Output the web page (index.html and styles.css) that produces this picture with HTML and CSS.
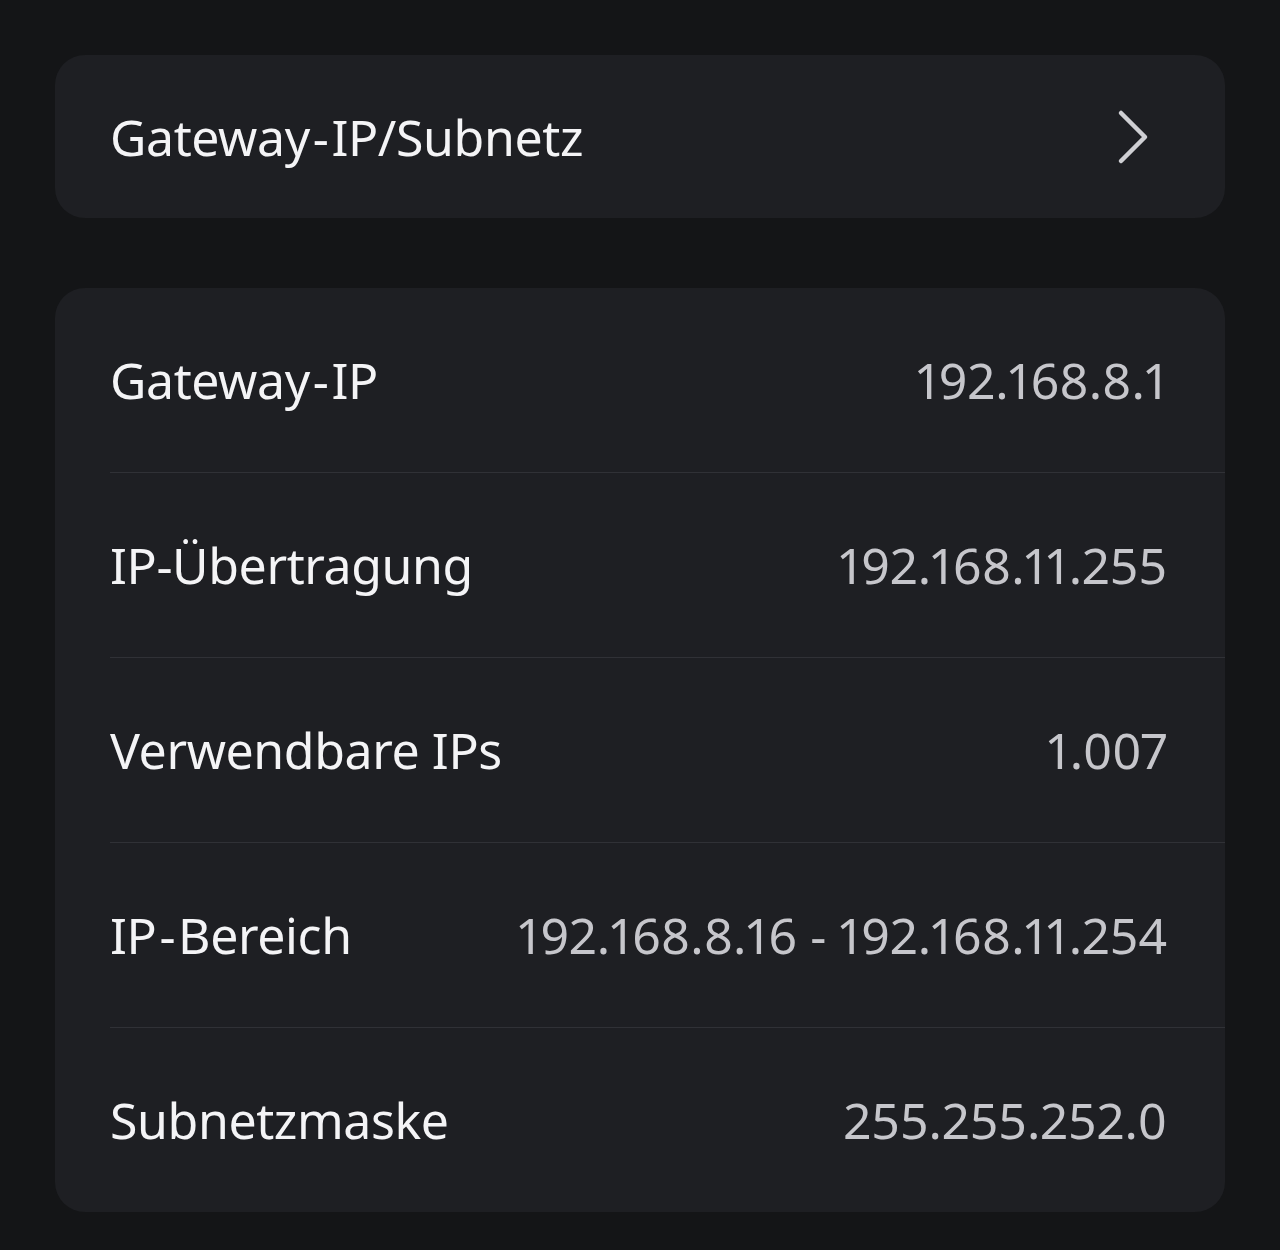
FILE: index.html
```html
<!DOCTYPE html>
<html lang="de">
<head>
<meta charset="utf-8">
<link rel="stylesheet" href="styles.css">
</head>
<body>
<main class="page">
  <section class="card nav-card">
    <div class="nav-row">
      <span class="label">Gateway<span class="hy">-</span>IP/Subnetz</span>
      <svg class="chevron" width="36" height="56" viewBox="0 0 36 56" aria-hidden="true">
        <path d="M6 4 L30 28 L6 52" fill="none" stroke="#cfcfd3" stroke-width="4.5" stroke-linecap="round" stroke-linejoin="round"/>
      </svg>
    </div>
  </section>

  <section class="card list-card">
    <div class="row">
      <span class="label">Gateway<span class="hy">-</span>IP</span>
      <span class="value">192.168.8.1</span>
    </div>
    <div class="row">
      <span class="label">IP-Übertragung</span>
      <span class="value">192.168.11.255</span>
    </div>
    <div class="row">
      <span class="label">Verwendbare IPs</span>
      <span class="value">1.007</span>
    </div>
    <div class="row">
      <span class="label">IP<span class="hy">-</span>Bereich</span>
      <span class="value">192.168.8.16 - 192.168.11.254</span>
    </div>
    <div class="row">
      <span class="label">Subnetzmaske</span>
      <span class="value">255.255.252.0</span>
    </div>
  </section>
</main>
</body>
</html>
```

FILE: styles.css
```css
html, body {
  margin: 0;
  padding: 0;
  background: #141517;
}

body {
  font-family: "Noto Sans", "Liberation Sans", sans-serif;
  -webkit-font-smoothing: antialiased;
}

.page {
  padding: 55px 55px 0 55px;
  display: flex;
  flex-direction: column;
  gap: 70px;
}

.card {
  background: #1e1f23;
  border-radius: 30px;
  overflow: hidden;
}

.nav-row {
  height: 163px;
  display: flex;
  align-items: center;
  justify-content: space-between;
  padding: 0 74px 0 55px;
}

.chevron {
  display: block;
}

.label {
  color: #f4f4f6;
  font-size: 50px;
  font-weight: 400;
  letter-spacing: -0.4px;
}

.hy {
  margin: 0 3px;
}

.value {
  color: #c6c6cb;
  font-size: 50px;
  font-weight: 400;
  font-variant-numeric: proportional-nums;
  letter-spacing: 0;
}

.list-card {
  padding-left: 55px;
}

.row {
  height: 185px;
  display: flex;
  align-items: center;
  justify-content: space-between;
  padding-right: 58px;
  border-top: 1px solid #303136;
  box-sizing: border-box;
}

.row:first-child {
  border-top: none;
  height: 184px;
}
```
